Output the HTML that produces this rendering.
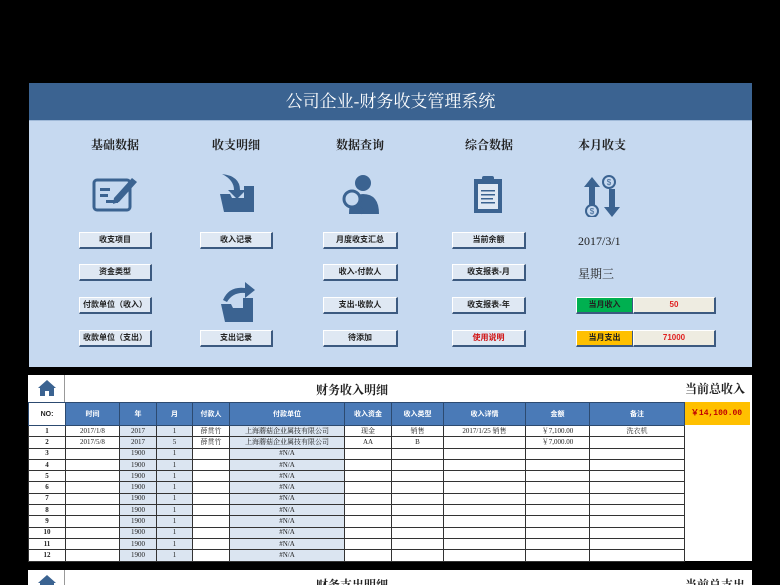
<!DOCTYPE html><html style="width:780px;height:585px;overflow:hidden"><head><meta charset="utf-8"><style>
*{margin:0;padding:0;box-sizing:border-box}
body{width:780px;height:585px;background:#000;position:relative;overflow:hidden;font-family:"Liberation Serif","Noto Serif CJK SC",serif}
.a{position:absolute}
.hdr{left:29px;top:83px;width:723px;height:38px;background:#3b6391;color:#fff;font-size:17px;text-align:center;line-height:38px;border-bottom:1px solid #9fb9d8}
.pan{left:29px;top:121px;width:723px;height:246px;background:#c6d9f0}
.h{font-size:12px;font-weight:bold;color:#222;width:100px;text-align:center;top:136px}
.b{height:17px;background:#dfe8f3;border:1px solid #fff;border-right:2px solid #3c5a80;border-bottom:2px solid #3c5a80;font-size:8px;font-weight:bold;text-align:center;line-height:14px;color:#222;font-family:"Liberation Sans","Noto Sans CJK SC",sans-serif}
.sec{left:28px;width:724px;background:#fff}
table{border-collapse:collapse;position:absolute;left:28px;top:402px;font-family:"Liberation Serif","Noto Serif CJK SC",serif;font-size:7px;table-layout:fixed}
td{border:1px solid #333;height:11.3px;text-align:center;padding:0;color:#222;line-height:9px;overflow:hidden;white-space:nowrap}
th{background:#4a7ab7;color:#fff;height:23px;border:1px solid #2c4a70;font-size:7px;font-family:"Liberation Sans","Noto Sans CJK SC",sans-serif}
.s{background:#dbe5f1}
</style></head><body>
<div class="a hdr">公司企业-财务收支管理系统</div>
<div class="a pan"></div>
<div class="a h" style="left:65px">基础数据</div>
<div class="a h" style="left:186px">收支明细</div>
<div class="a h" style="left:310px">数据查询</div>
<div class="a h" style="left:439px">综合数据</div>
<div class="a h" style="left:552px">本月收支</div>
<svg class="a" style="left:92px;top:174px" width="48" height="42" viewBox="0 0 48 42"><rect x="2" y="6" width="36" height="30" rx="3" fill="none" stroke="#3b6391" stroke-width="3"/><rect x="8" y="14" width="10" height="3" fill="#3b6391"/><rect x="8" y="20" width="8" height="3" fill="#3b6391"/><rect x="14" y="26" width="12" height="3" fill="#3b6391"/><path d="M22 24 L40 4 L45 8 L27 28 L21 30Z" fill="#3b6391"/></svg>
<svg class="a" style="left:218px;top:172px" width="40" height="42" viewBox="0 0 40 42"><path d="M4 2 Q22 4 22 18 L28 18 L19 27 L10 18 L16 18 Q16 8 4 2Z" fill="#3b6391"/><path d="M2 22 L12 22 L14 26 L36 26 L36 40 L6 40Z" fill="#3b6391"/><rect x="26" y="14" width="10" height="12" fill="#3b6391"/></svg>
<svg class="a" style="left:219px;top:280px" width="40" height="42" viewBox="0 0 40 42"><path d="M4 20 Q10 6 26 8 L26 2 L36 10 L26 18 L26 13 Q14 12 8 22Z" fill="#3b6391"/><path d="M2 24 L12 24 L14 28 L34 28 L34 42 L6 42Z" fill="#3b6391"/><rect x="24" y="18" width="10" height="10" fill="#3b6391"/></svg>
<svg class="a" style="left:337px;top:172px" width="46" height="44" viewBox="0 0 46 44"><circle cx="26" cy="11" r="8" fill="#3b6391"/><path d="M12 42 Q12 22 26 22 Q42 22 42 42Z" fill="#3b6391"/><circle cx="15" cy="27" r="8" fill="#c6d9f0" stroke="#3b6391" stroke-width="3"/><path d="M20 33 L26 41" stroke="#3b6391" stroke-width="4"/></svg>
<svg class="a" style="left:472px;top:175px" width="32" height="40" viewBox="0 0 32 40"><rect x="2" y="4" width="28" height="34" fill="#3b6391"/><rect x="6" y="9" width="20" height="25" fill="#dfe8f3"/><rect x="10" y="1" width="12" height="6" rx="2" fill="#3b6391"/><g fill="#3b6391"><rect x="9" y="15" width="14" height="1.5"/><rect x="9" y="19" width="14" height="1.5"/><rect x="9" y="23" width="12" height="1.5"/><rect x="9" y="27" width="14" height="1.5"/></g></svg>
<svg class="a" style="left:583px;top:175px" width="40" height="42" viewBox="0 0 40 42"><path d="M9 2 L17 12 L12 12 L12 30 L6 30 L6 12 L1 12Z" fill="#3b6391"/><path d="M26 14 L32 14 L32 32 L37 32 L29 42 L21 32 L26 32Z" fill="#3b6391"/><circle cx="26" cy="7" r="6" fill="none" stroke="#3b6391" stroke-width="2"/><circle cx="9" cy="36" r="6" fill="none" stroke="#3b6391" stroke-width="2"/><text x="26" y="10" font-size="8" fill="#3b6391" text-anchor="middle" font-family="Liberation Sans">$</text><text x="9" y="39" font-size="8" fill="#3b6391" text-anchor="middle" font-family="Liberation Sans">$</text></svg>
<div class="a b" style="left:79px;top:232px;width:73px">收支项目</div>
<div class="a b" style="left:79px;top:264px;width:73px">资金类型</div>
<div class="a b" style="left:79px;top:297px;width:73px">付款单位（收入）</div>
<div class="a b" style="left:79px;top:330px;width:73px">收款单位（支出）</div>
<div class="a b" style="left:200px;top:232px;width:73px">收入记录</div>
<div class="a b" style="left:200px;top:330px;width:73px">支出记录</div>
<div class="a b" style="left:323px;top:232px;width:75px">月度收支汇总</div>
<div class="a b" style="left:323px;top:264px;width:75px">收入-付款人</div>
<div class="a b" style="left:323px;top:297px;width:75px">支出-收款人</div>
<div class="a b" style="left:323px;top:330px;width:75px">待添加</div>
<div class="a b" style="left:452px;top:232px;width:74px">当前余额</div>
<div class="a b" style="left:452px;top:264px;width:74px">收支报表-月</div>
<div class="a b" style="left:452px;top:297px;width:74px">收支报表-年</div>
<div class="a b" style="left:452px;top:330px;width:74px;color:#d01010">使用说明</div>
<div class="a" style="left:578px;top:234px;font-size:12px;color:#222">2017/3/1</div>
<div class="a" style="left:578px;top:265px;font-size:12px;color:#222">星期三</div>
<div class="a b" style="left:576px;top:297px;width:58px;background:#00b050">当月收入</div>
<div class="a b" style="left:633px;top:297px;width:83px;background:#eeece1;color:#e02020">50</div>
<div class="a b" style="left:576px;top:330px;width:58px;background:#ffc000">当月支出</div>
<div class="a b" style="left:633px;top:330px;width:83px;background:#eeece1;color:#e02020">71000</div>
<div class="a sec" style="top:375px;height:186px"></div>
<div class="a" style="left:28px;top:375px;width:37px;height:27px;border-right:1px solid #999"></div>
<svg class="a" style="left:37px;top:379px" width="20" height="18" viewBox="0 0 20 18"><path d="M10 1 L1 9 L3 9 L3 17 L8 17 L8 12 L12 12 L12 17 L17 17 L17 9 L19 9Z" fill="#3b6391"/></svg>
<div class="a" style="left:316px;top:381px;font-size:12px;font-weight:bold;color:#222">财务收入明细</div>
<div class="a" style="left:685px;top:380px;font-size:12px;font-weight:bold;color:#222">当前总收入</div>
<div class="a" style="left:683px;top:402px;width:67px;height:23px;background:#ffc000;color:#c00000;font-size:8px;font-weight:bold;text-align:center;line-height:23px;font-family:'Liberation Mono',monospace">￥14,100.00</div>
<table>
<colgroup><col style="width:37px"><col style="width:54px"><col style="width:37px"><col style="width:36px"><col style="width:37px"><col style="width:115px"><col style="width:47px"><col style="width:52px"><col style="width:82px"><col style="width:64px"><col style="width:95px"></colgroup>
<tr><th style="background:#fff;color:#222">NO:</th><th>时间</th><th>年</th><th>月</th><th>付款人</th><th>付款单位</th><th>收入资金</th><th>收入类型</th><th>收入详情</th><th>金额</th><th>备注</th></tr>
<tr><td><b>1</b></td><td>2017/1/8</td><td class="s">2017</td><td class="s">1</td><td>薛贯竹</td><td class="s">上海蘑菇企业属技有限公司</td><td>现金</td><td>销售</td><td>2017/1/25 销售</td><td>￥7,100.00</td><td>洗衣机</td></tr>
<tr><td><b>2</b></td><td>2017/5/8</td><td class="s">2017</td><td class="s">5</td><td>薛贯竹</td><td class="s">上海蘑菇企业属技有限公司</td><td>AA</td><td>B</td><td></td><td>￥7,000.00</td><td></td></tr>
<tr><td><b>3</b></td><td></td><td class="s">1900</td><td class="s">1</td><td></td><td class="s">#N/A</td><td></td><td></td><td></td><td></td><td></td></tr>
<tr><td><b>4</b></td><td></td><td class="s">1900</td><td class="s">1</td><td></td><td class="s">#N/A</td><td></td><td></td><td></td><td></td><td></td></tr>
<tr><td><b>5</b></td><td></td><td class="s">1900</td><td class="s">1</td><td></td><td class="s">#N/A</td><td></td><td></td><td></td><td></td><td></td></tr>
<tr><td><b>6</b></td><td></td><td class="s">1900</td><td class="s">1</td><td></td><td class="s">#N/A</td><td></td><td></td><td></td><td></td><td></td></tr>
<tr><td><b>7</b></td><td></td><td class="s">1900</td><td class="s">1</td><td></td><td class="s">#N/A</td><td></td><td></td><td></td><td></td><td></td></tr>
<tr><td><b>8</b></td><td></td><td class="s">1900</td><td class="s">1</td><td></td><td class="s">#N/A</td><td></td><td></td><td></td><td></td><td></td></tr>
<tr><td><b>9</b></td><td></td><td class="s">1900</td><td class="s">1</td><td></td><td class="s">#N/A</td><td></td><td></td><td></td><td></td><td></td></tr>
<tr><td><b>10</b></td><td></td><td class="s">1900</td><td class="s">1</td><td></td><td class="s">#N/A</td><td></td><td></td><td></td><td></td><td></td></tr>
<tr><td><b>11</b></td><td></td><td class="s">1900</td><td class="s">1</td><td></td><td class="s">#N/A</td><td></td><td></td><td></td><td></td><td></td></tr>
<tr><td><b>12</b></td><td></td><td class="s">1900</td><td class="s">1</td><td></td><td class="s">#N/A</td><td></td><td></td><td></td><td></td><td></td></tr>
</table>
<div class="a sec" style="top:570px;height:15px"></div>
<div class="a" style="left:28px;top:570px;width:37px;height:15px;border-right:1px solid #999"></div>
<svg class="a" style="left:37px;top:574px" width="20" height="11" viewBox="0 0 20 11"><path d="M10 1 L1 9 L3 9 L3 11 L17 11 L17 9 L19 9Z" fill="#3b6391"/></svg>
<div class="a" style="left:316px;top:576px;font-size:12px;font-weight:bold;color:#222;height:9px;overflow:hidden">财务支出明细</div>
<div class="a" style="left:685px;top:576px;font-size:12px;font-weight:bold;color:#222;height:9px;overflow:hidden">当前总支出</div>
</body></html>
